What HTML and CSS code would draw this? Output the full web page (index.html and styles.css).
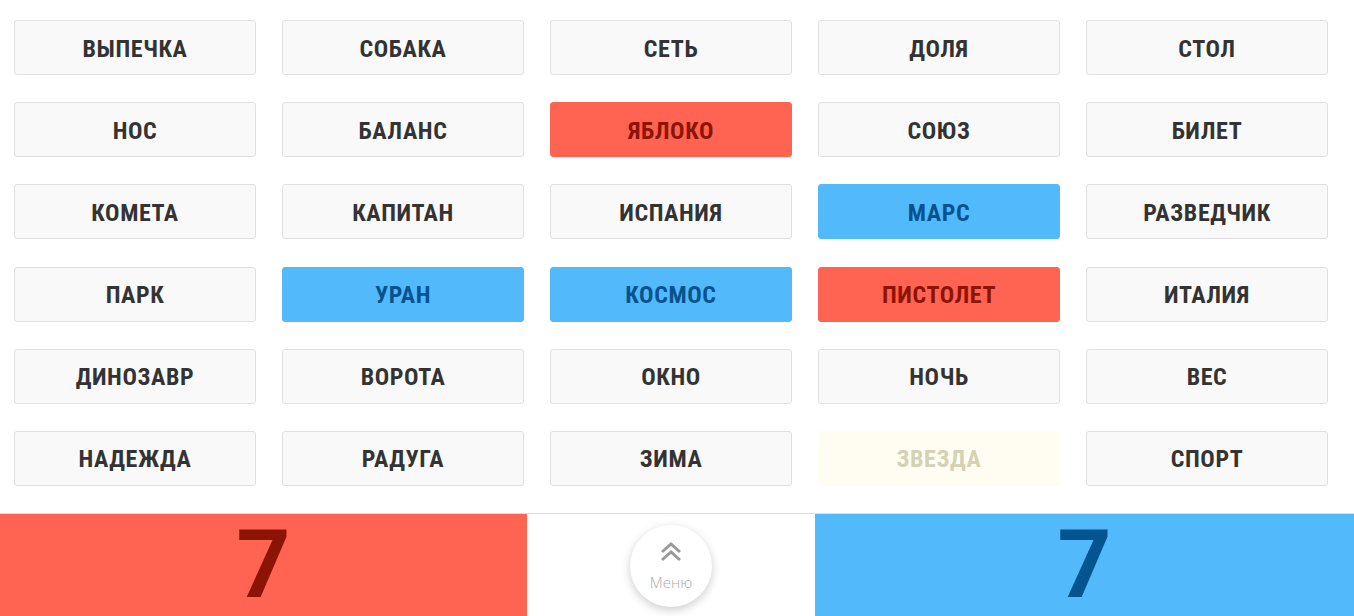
FILE: index.html
```html
<!DOCTYPE html>
<html lang="ru">
<head>
    <meta charset="UTF-8">
    <title>Codenames</title>
    <link rel="stylesheet" href="styles.css">
</head>
<body>

    <div id="board">
        <div class="card">ВЫПЕЧКА</div>
        <div class="card">СОБАКА</div>
        <div class="card">СЕТЬ</div>
        <div class="card">ДОЛЯ</div>
        <div class="card">СТОЛ</div>

        <div class="card">НОС</div>
        <div class="card">БАЛАНС</div>
        <div class="card red">ЯБЛОКО</div>
        <div class="card">СОЮЗ</div>
        <div class="card">БИЛЕТ</div>

        <div class="card">КОМЕТА</div>
        <div class="card">КАПИТАН</div>
        <div class="card">ИСПАНИЯ</div>
        <div class="card blue">МАРС</div>
        <div class="card">РАЗВЕДЧИК</div>

        <div class="card">ПАРК</div>
        <div class="card blue">УРАН</div>
        <div class="card blue">КОСМОС</div>
        <div class="card red">ПИСТОЛЕТ</div>
        <div class="card">ИТАЛИЯ</div>

        <div class="card">ДИНОЗАВР</div>
        <div class="card">ВОРОТА</div>
        <div class="card">ОКНО</div>
        <div class="card">НОЧЬ</div>
        <div class="card">ВЕС</div>

        <div class="card">НАДЕЖДА</div>
        <div class="card">РАДУГА</div>
        <div class="card">ЗИМА</div>
        <div class="card neutral">ЗВЕЗДА</div>
        <div class="card">СПОРТ</div>
    </div>

    <div id="score">
        <div class="team red-team">7</div>
        <div class="middle">
            <button class="menu-btn">
                <svg width="24" height="22" viewBox="0 0 24 22">
                    <path d="M3 11 L12 3 L21 11" fill="none" stroke="#999" stroke-width="3"/>
                    <path d="M3 19 L12 11 L21 19" fill="none" stroke="#999" stroke-width="3"/>
                </svg>
                <span>Меню</span>
            </button>
        </div>
        <div class="team blue-team">7</div>
    </div>

</body>
</html>
```

FILE: styles.css
```css
body {
    margin: 0;
    padding: 0;
    background: #fff;
    font-family: "Roboto Condensed", "Liberation Sans Narrow", "DejaVu Sans Condensed", Roboto, sans-serif;
    height: 616px;
    overflow: hidden;
}

#board {
    display: grid;
    grid-template-columns: repeat(5, 242px);
    grid-auto-rows: 55px;
    column-gap: 26px;
    row-gap: 27.2px;
    padding: 20px 26px 0 14px;
    height: 513px;
    box-sizing: border-box;
}

.card {
    background: #f9f9f9;
    border: 1px solid #e0e0e0;
    border-radius: 3px;
    display: flex;
    align-items: center;
    justify-content: center;
    padding-top: 2px;
    font-weight: bold;
    font-size: 24px;
    letter-spacing: 0.6px;
    color: #333;
    box-sizing: border-box;
}

.card.red {
    background: #ff6351;
    border-color: #ff6351;
    color: #8c1405;
}

.card.blue {
    background: #52b9fb;
    border-color: #52b9fb;
    color: #08538f;
}

.card.neutral {
    background: #fffdf2;
    border-color: #fffdf2;
    color: #d4d1b4;
}

#score {
    display: grid;
    grid-template-columns: 527px 288px 1fr;
    height: 103px;
    border-top: 1px solid #ddd;
    box-sizing: border-box;
}

.team {
    text-align: center;
    font-family: Roboto, sans-serif;
    font-weight: bold;
    font-size: 94px;
    line-height: 102px;
}

.red-team {
    background: #ff6351;
    color: #8c1405;
}

.blue-team {
    background: #52b9fb;
    color: #03548f;
}

.middle {
    display: flex;
    justify-content: center;
    padding-top: 11px;
}

.menu-btn {
    width: 82px;
    height: 82px;
    border-radius: 50%;
    border: none;
    background: #fff;
    box-shadow: 0 3px 10px rgba(0, 0, 0, 0.2);
    display: flex;
    flex-direction: column;
    align-items: center;
    justify-content: center;
    padding: 0;
    gap: 9px;
    cursor: pointer;
}

.menu-btn span {
    font-family: "Open Sans", sans-serif;
    font-weight: 300;
    font-size: 15px;
    color: #aaa;
}
```
